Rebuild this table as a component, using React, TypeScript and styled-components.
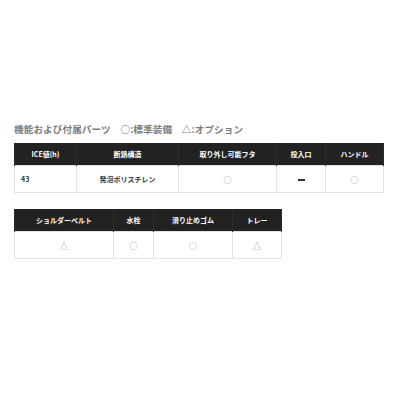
import React from "react";
import styled, { createGlobalStyle } from "styled-components";

const Global = createGlobalStyle`
  html, body { margin: 0; padding: 0; background: #fff; }
  body { font-family: "Noto Sans CJK JP", "Noto Sans", sans-serif; }
`;

const Page = styled.div`
  width: 400px;
  height: 400px;
  box-sizing: border-box;
  padding: 122px 0 0 14px;
  display: flex;
  flex-direction: column;
  align-items: flex-start;
`;

const Title = styled.h3`
  margin: 0 0 7px;
  font-size: 9.6px;
  line-height: 14px;
  font-weight: 700;
  color: #7c7c7c;
  letter-spacing: 0.1px;
  white-space: pre;
`;

const Table = styled.table<{ $width: number; $gap?: number }>`
  width: ${(p) => p.$width}px;
  border-collapse: collapse;
  table-layout: fixed;
  margin-bottom: ${(p) => p.$gap ?? 0}px;
`;

const Th = styled.th`
  height: 22px;
  padding: 0;
  background: #222;
  color: #fff;
  font-size: 7px;
  font-weight: 700;
  text-align: center;
  border-left: 1px solid #2c2c2c;
  border-right: 1px solid #2c2c2c;
  white-space: nowrap;
`;

const Td = styled.td<{ $align?: "left" | "center"; $muted?: boolean }>`
  height: 26px;
  padding: 0 ${(p) => (p.$align === "left" ? "6px" : "0")};
  background: #fff;
  border: 1px solid #e3e3e3;
  text-align: ${(p) => p.$align ?? "center"};
  font-size: ${(p) => (p.$muted ? "8px" : "7px")};
  font-weight: ${(p) => (p.$muted ? 400 : 700)};
  color: ${(p) => (p.$muted ? "#8a8a8a" : "#333")};
  white-space: nowrap;
`;

const Dash = styled.span`
  display: inline-block;
  width: 7px;
  height: 1.5px;
  background: #333;
  vertical-align: middle;
`;

type Cell = { text: React.ReactNode; align?: "left" | "center"; muted?: boolean };

const table1 = {
  widths: [62, 102, 98, 49, 58],
  heads: ["ICE値(h)", "断熱構造", "取り外し可能フタ", "投入口", "ハンドル"],
  cells: [
    { text: "43", align: "left" },
    { text: "発泡ポリスチレン" },
    { text: "○", muted: true },
    { text: <Dash /> },
    { text: "○", muted: true },
  ] as Cell[],
};

const table2 = {
  widths: [99, 40, 79, 49],
  heads: ["ショルダーベルト", "水栓", "滑り止めゴム", "トレー"],
  cells: [
    { text: "△", muted: true },
    { text: "○", muted: true },
    { text: "○", muted: true },
    { text: "△", muted: true },
  ] as Cell[],
};

function SpecTable({ data, gap }: { data: typeof table1; gap?: number }) {
  const total = data.widths.reduce((a, b) => a + b, 0);
  return (
    <Table $width={total} $gap={gap}>
      <colgroup>
        {data.widths.map((w, i) => (
          <col key={i} style={{ width: w }} />
        ))}
      </colgroup>
      <thead>
        <tr>
          {data.heads.map((h) => (
            <Th key={h}>{h}</Th>
          ))}
        </tr>
      </thead>
      <tbody>
        <tr>
          {data.cells.map((c, i) => (
            <Td key={i} $align={c.align} $muted={c.muted}>
              {c.text}
            </Td>
          ))}
        </tr>
      </tbody>
    </Table>
  );
}

export default function App() {
  return (
    <>
      <Global />
      <Page>
        <Title>{"機能および付属パーツ　○:標準装備　△:オプション"}</Title>
        <SpecTable data={table1} gap={16} />
        <SpecTable data={table2} />
      </Page>
    </>
  );
}
